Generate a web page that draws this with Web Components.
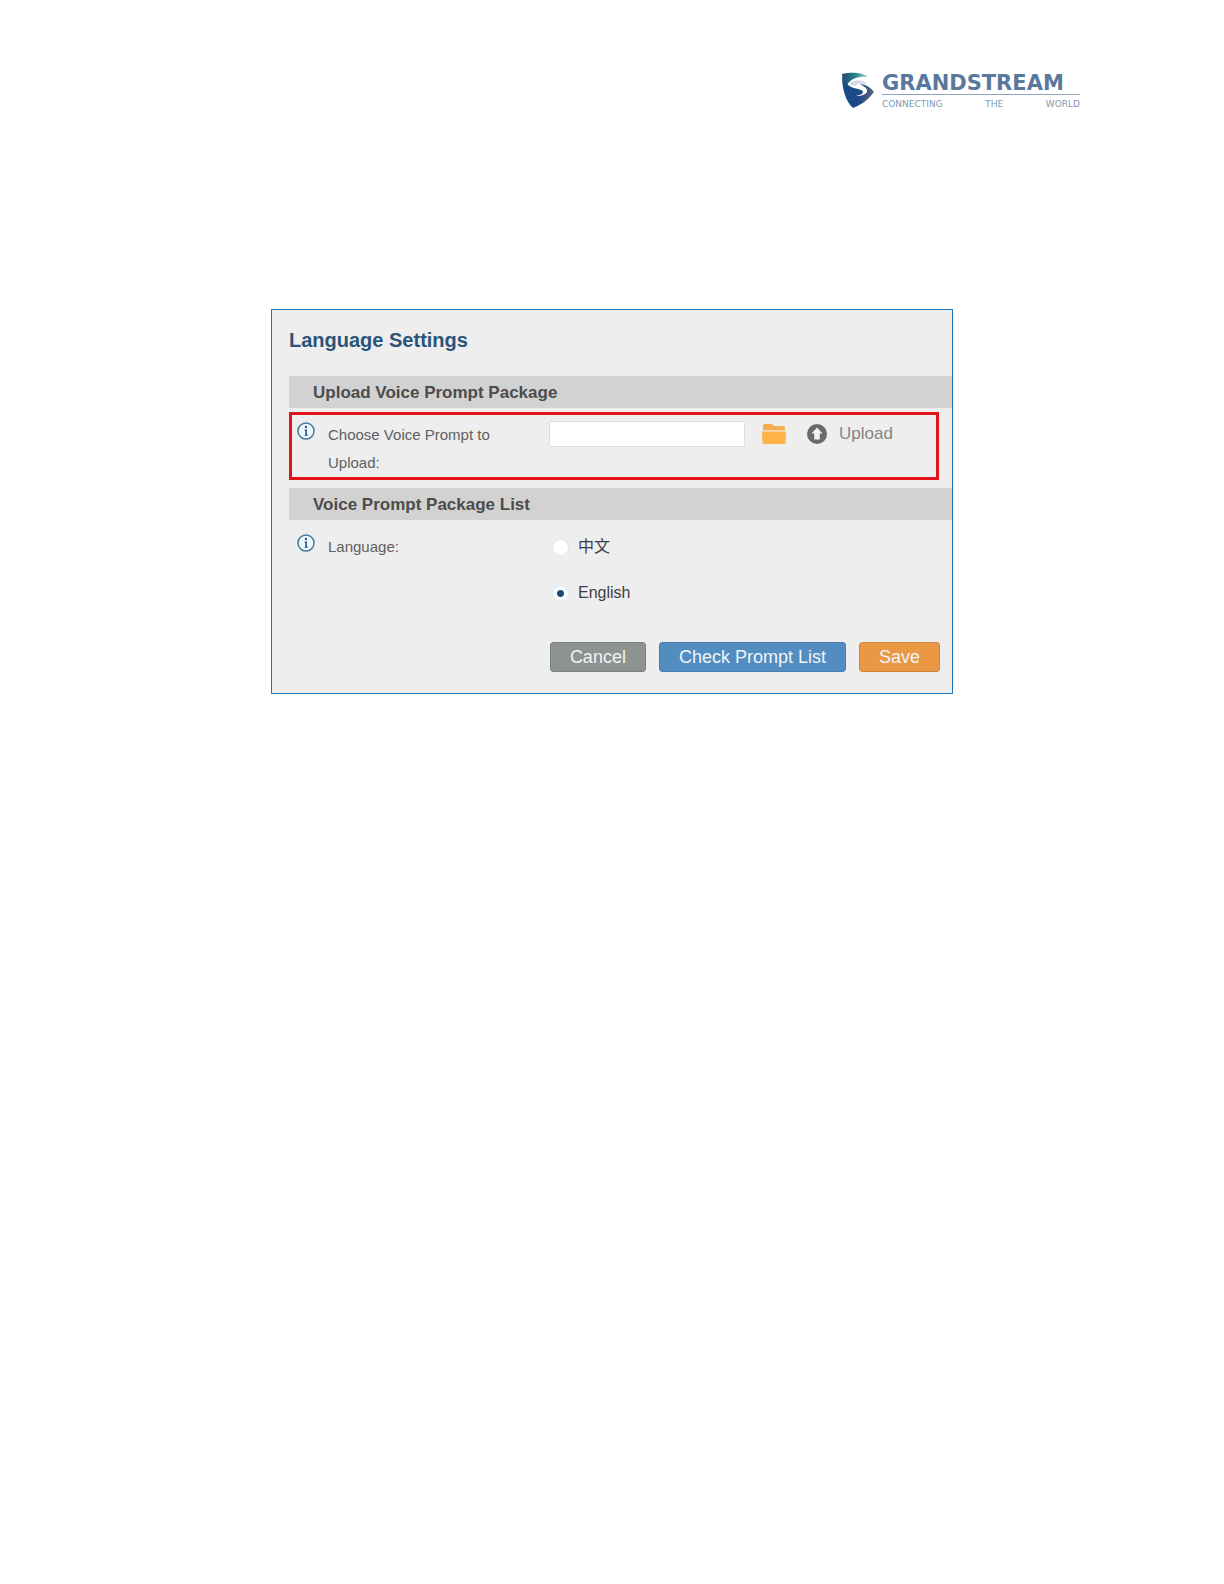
<!DOCTYPE html>
<html lang="en">
<head>
<meta charset="utf-8">
<meta name="viewport" content="width=device-width, initial-scale=1">
<title>Language Settings</title>
<style>
body {
  margin: 0;
  background-color: #ffffff;
  font-family: "Liberation Sans", Arial, "Noto Sans CJK SC", sans-serif;
}

header {
  display: flex;
  justify-content: flex-end;
  padding: 72px 144px 0;
}

main {
  padding: 200px 16px 64px;
}
</style>
</head>
<body>
<header><brand-logo></brand-logo></header>
<main><language-settings></language-settings></main>

<script>
const brandLogoTemplate = document.createElement('template');
brandLogoTemplate.innerHTML = `
<style>
:host {
  display: flex;
  gap: 7px;
  color: #5a779c;
  font-family: "DejaVu Sans", Verdana, sans-serif;
}

svg {
  width: 34px;
  height: 37px;
}

.name {
  min-width: 198px;
  font-size: 21px;
  font-weight: bold;
  line-height: 22px;
}

.tagline {
  display: flex;
  justify-content: space-between;
  border-top: 1px solid #8fa5bf;
  padding-top: 4px;
  font-size: 9px;
  line-height: 10px;
  color: #8296b1;
}
</style>
<svg viewBox="0 0 34 37" aria-hidden="true">
  <defs>
    <linearGradient id="top" x1="0" y1="0" x2="1" y2="0">
      <stop offset="0" stop-color="#23466e"/>
      <stop offset=".5" stop-color="#23828f"/>
      <stop offset="1" stop-color="#a5d2d3"/>
    </linearGradient>
    <linearGradient id="side" x1="0" y1="0" x2="1" y2="0">
      <stop offset="0" stop-color="#174d82"/>
      <stop offset=".55" stop-color="#20478c"/>
      <stop offset="1" stop-color="#5d6873"/>
    </linearGradient>
  </defs>
  <path d="M1 2C9 0 21 0 27 5C18 4 10 6 6 13C3 10 1 6 1 2Z" fill="url(#top)"/>
  <path d="M1 4C3 10 7 14 13 16C18 17 22 18 22 20C22 22 19 23 15 24C21 24 27 22 26 18C25 15 22 14 19 12C25 12 30 16 33 20C27 28 20 33 12 36C5 30 1 17 1 4Z" fill="url(#side)"/>
  <path d="M8 12C13 7 20 7 26 12C22 11 17 11 14 14Z" fill="#d5dce3"/>
</svg>
<div>
  <div class="name">GRANDSTREAM</div>
  <div class="tagline"><span>CONNECTING</span> <span>THE</span> <span>WORLD</span></div>
</div>
`;

class BrandLogo extends HTMLElement {
  constructor() {
    super();
    this.attachShadow({ mode: 'open' });
    this.shadowRoot.appendChild(brandLogoTemplate.content.cloneNode(true));
  }
}
window.customElements.define('brand-logo', BrandLogo);

const sectionBarTemplate = document.createElement('template');
sectionBarTemplate.innerHTML = `
<style>
:host {
  display: block;
  background-color: #d2d2d2;
}

h2 {
  margin: 0;
  padding: 2px 24px 0;
  font-size: 17px;
  line-height: 30px;
  color: #4c4c4c;
}
</style>
<h2><slot></slot></h2>
`;

class SectionBar extends HTMLElement {
  constructor() {
    super();
    this.attachShadow({ mode: 'open' });
    this.shadowRoot.appendChild(sectionBarTemplate.content.cloneNode(true));
  }
}
window.customElements.define('section-bar', SectionBar);

// one settings line: info icon, caption, then the controls
const fieldRowTemplate = document.createElement('template');
fieldRowTemplate.innerHTML = `
<style>
:host {
  display: grid;
  grid-template-columns: 18px 208px 1fr;
  column-gap: 13px;
  align-items: start;
  border: 3px solid transparent;
  padding: 4px 5px 0;
}

:host([highlighted]) {
  border-color: #e01418;
}

svg {
  width: 18px;
  height: 18px;
  margin-top: 3px;
}

.caption {
  padding-top: 2px;
  font-size: 15px;
  line-height: 28px;
  color: #606060;
}

.controls {
  padding-top: 2px;
}
</style>
<svg viewBox="0 0 18 18" aria-hidden="true">
  <circle cx="9" cy="9" r="8" fill="#eef8fc" stroke="#42799c" stroke-width="1.5"/>
  <circle cx="9" cy="5" r="1.2" fill="#255f85"/>
  <path d="M7.500 7.500H10V12.800H10.800V13.800H7.500V12.800H8.300V8.500H7.500z" fill="#255f85"/>
</svg>
<div class="caption"><slot name="caption"></slot></div>
<div class="controls"><slot></slot></div>
`;

class FieldRow extends HTMLElement {
  constructor() {
    super();
    this.attachShadow({ mode: 'open' });
    this.shadowRoot.appendChild(fieldRowTemplate.content.cloneNode(true));
  }
}
window.customElements.define('field-row', FieldRow);

const actionButtonTemplate = document.createElement('template');
actionButtonTemplate.innerHTML = `
<style>
:host {
  display: block;
}

button {
  height: 30px;
  border: 1px solid rgba(0, 0, 0, 0.12);
  border-radius: 4px;
  padding: 0 19px;
  background-color: var(--button-color, #8d9391);
  color: #f0f4f6;
  font-family: inherit;
  font-size: 18px;
  line-height: 28px;
}
</style>
<button type="button"><slot></slot></button>
`;

class ActionButton extends HTMLElement {
  constructor() {
    super();
    this.attachShadow({ mode: 'open' });
    this.shadowRoot.appendChild(actionButtonTemplate.content.cloneNode(true));
  }
}
window.customElements.define('action-button', ActionButton);

const languageSettingsTemplate = document.createElement('template');
languageSettingsTemplate.innerHTML = `
<style>
:host {
  display: block;
  box-sizing: border-box;
  max-width: 682px;
  margin: 0 auto;
  border: 1px solid #1b77bf;
  padding: 15px 0 21px 17px;
  background-color: #eeeeee;
}

h1 {
  margin: 0 0 21px;
  font-size: 20px;
  line-height: 30px;
  color: #2a5579;
}

field-row {
  margin: 4px 13px 8px 0;
}

.picker {
  display: flex;
  align-items: center;
}

input[type="text"] {
  box-sizing: border-box;
  flex: 0 1 196px;
  min-width: 0;
  height: 26px;
  border: 1px solid #dfdfdf;
  border-radius: 2px;
  background-color: #ffffff;
}

.picker button {
  display: flex;
  align-items: center;
  gap: 12px;
  border: 0;
  padding: 0;
  background: none;
  color: #858585;
  font-family: inherit;
  font-size: 17px;
  line-height: 26px;
}

.browse {
  margin: 0 21px 0 17px;
}

.browse svg {
  width: 24px;
  height: 22px;
}

.upload svg {
  width: 20px;
  height: 20px;
}

fieldset {
  display: grid;
  gap: 18px;
  margin: 0;
  border: 0;
  padding: 0;
}

.option {
  display: flex;
  align-items: center;
  gap: 9px;
  padding-left: 3px;
  font-size: 16px;
  line-height: 28px;
  color: #3c3f46;
}

input[type="radio"] {
  appearance: none;
  width: 17px;
  height: 17px;
  margin: 0;
  border: 1px solid #e5e5e5;
  border-radius: 50%;
  background-color: #ffffff;
}

input[type="radio"]:checked {
  border-color: #d8edf6;
  background: radial-gradient(circle, #1f4a70 3px, #f4fcff 4px);
}

.actions {
  display: flex;
  justify-content: flex-end;
  gap: 13px;
  margin: 32px 12px 0 0;
}
</style>
<h1>Language Settings</h1>
<section-bar>Upload Voice Prompt Package</section-bar>
<field-row highlighted>
  <label slot="caption" for="package">Choose Voice Prompt to Upload:</label>
  <div class="picker">
    <input type="text" id="package">
    <button type="button" class="browse" aria-label="Browse">
      <svg viewBox="0 0 24 22" aria-hidden="true">
        <path d="M1 7V2.500Q1 1 2.500 1H10l2 2h9.500Q23 3 23 4.500V7z" fill="#f5ae4f"/>
        <path d="M0 8.500h24L23.500 20q0 1-1.500 1H2q-1.500 0-1.500-1z" fill="#fdb347"/>
        <path d="M1 7.700h22" stroke="#f6d39f" stroke-width="1"/>
      </svg>
    </button>
    <button type="button" class="upload">
      <svg viewBox="0 0 20 20" aria-hidden="true">
        <circle cx="10" cy="10" r="10" fill="#6a6a6a"/>
        <path d="M10 3.500L15.500 9.500H12.800V15.500H7.200V9.500H4.500z" fill="#f2f2f2"/>
      </svg>
      Upload
    </button>
  </div>
</field-row>
<section-bar>Voice Prompt Package List</section-bar>
<field-row>
  <span slot="caption" id="language">Language:</span>
  <fieldset aria-labelledby="language">
    <label class="option"><input type="radio" name="language" value="zh"><span lang="zh">中文</span></label>
    <label class="option"><input type="radio" name="language" value="en" checked><span>English</span></label>
  </fieldset>
</field-row>
<div class="actions">
  <action-button>Cancel</action-button>
  <action-button style="--button-color: #528dc2">Check Prompt List</action-button>
  <action-button style="--button-color: #eb9844">Save</action-button>
</div>
`;

class LanguageSettings extends HTMLElement {
  constructor() {
    super();
    this.attachShadow({ mode: 'open' });
    this.shadowRoot.appendChild(languageSettingsTemplate.content.cloneNode(true));
  }
}
window.customElements.define('language-settings', LanguageSettings);
</script>
</body>
</html>
